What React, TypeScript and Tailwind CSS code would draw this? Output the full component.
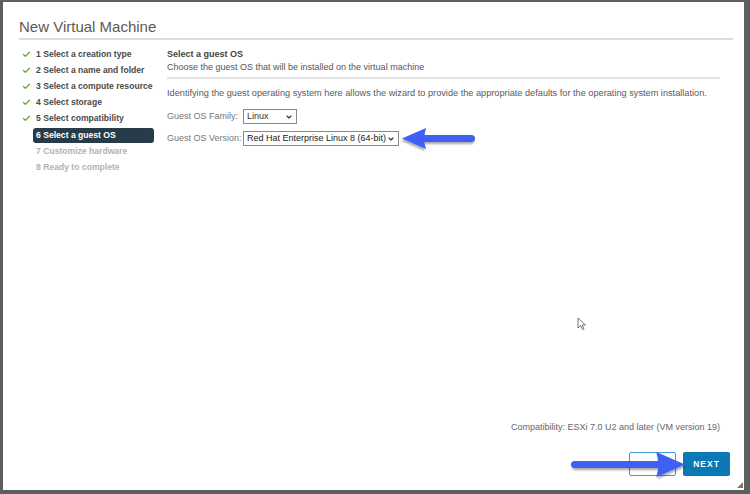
import { Check, ChevronDown } from "lucide-react";

const steps = [
  { n: 1, label: "Select a creation type", done: true },
  { n: 2, label: "Select a name and folder", done: true },
  { n: 3, label: "Select a compute resource", done: true },
  { n: 4, label: "Select storage", done: true },
  { n: 5, label: "Select compatibility", done: true },
  { n: 6, label: "Select a guest OS", active: true },
  { n: 7, label: "Customize hardware" },
  { n: 8, label: "Ready to complete" },
];

// blue annotation arrow, drawn pointing right then flipped if needed
function Arrow({ dir, len, h }: { dir: "left" | "right"; len: number; h: number }) {
  const mid = h / 2;
  const head = h * 1.15;
  return (
    <svg width={len + 6} height={h + 6} viewBox={`0 0 ${len + 6} ${h + 6}`} className={dir === "left" ? "-scale-x-100" : ""}>
      <defs>
        <filter id={`sh-${dir}`} x="-10%" y="-30%" width="120%" height="170%">
          <feDropShadow dx="1" dy="2" stdDeviation="1.3" floodColor="#000" floodOpacity="0.35" />
        </filter>
      </defs>
      <g filter={`url(#sh-${dir})`} fill="#3f5ff5">
        <rect x="1" y={mid - 3.5} width={len - head + 6} height="7" rx="3.5" />
        <path d={`M${len - head} 0 L${len} ${mid} L${len - head} ${h} Q${len - head + 4} ${mid} ${len - head} 0 Z`} />
      </g>
    </svg>
  );
}

export default function App() {
  return (
    <div className="relative h-[494px] w-[750px] overflow-hidden bg-[#5e5e5e] pt-[2px] pl-[3px] pr-[6px] pb-[4px] font-['Liberation_Sans',Arial,sans-serif]">
      <div className="flex h-full flex-col bg-white">
        {/* Header */}
        <div className="mx-[16px] mr-[11px] mt-[15px] border-b-2 border-[#dcdcdc] pb-[2px]">
          <h1 className="text-[15px] leading-[19px] font-normal text-[#5a5a5a]">New Virtual Machine</h1>
        </div>

        <div className="flex flex-1">
          {/* Steps */}
          <div className="w-[164px] shrink-0 pl-[17px] pt-[6px]">
            {steps.map((s) => (
              <div key={s.n} className="flex h-[16.2px] items-center">
                <span className="flex w-[12px] justify-center">
                  {s.done && <Check size={9} strokeWidth={3.5} className="text-[#5aae1e]" />}
                </span>
                <span
                  className={`ml-[1px] flex h-[15px] w-[121px] items-center whitespace-nowrap rounded-[3px] px-[3px] text-[8.6px] font-bold ${
                    s.active ? "bg-[#283b48] text-white" : s.done ? "text-[#4a4a4a]" : "text-[#b3b3b3]"
                  }`}
                >
                  {s.n} {s.label}
                </span>
              </div>
            ))}
          </div>

          {/* Content */}
          <div className="flex flex-1 flex-col pr-[24px] pt-[9px]">
            <p className="text-[9px] leading-[11px] font-bold text-[#444]">Select a guest OS</p>
            <p className="mt-[2px] text-[9px] leading-[11px] text-[#555]">Choose the guest OS that will be installed on the virtual machine</p>
            <div className="mt-[4px] h-[2px] bg-[#e2e2e2]" />
            <p className="mt-[9px] text-[9.2px] leading-[11px] text-[#5a5a5a]">
              Identifying the guest operating system here allows the wizard to provide the appropriate defaults for the operating system installation.
            </p>
            <div className="mt-[10px] flex items-center">
              <span className="w-[76px] text-[9px] text-[#777]">Guest OS Family:</span>
              <div className="flex h-[15px] w-[54px] items-center justify-between border border-[#8a8a8a] px-[3px] text-[9px] text-[#333]">
                <span>Linux</span>
                <ChevronDown size={8} strokeWidth={3.5} className="text-[#333]" />
              </div>
            </div>
            <div className="mt-[7px] flex items-center">
              <span className="w-[76px] text-[9px] text-[#777]">Guest OS Version:</span>
              <div className="flex h-[15px] w-[156px] items-center justify-between border border-[#8a8a8a] px-[3px] text-[9px] text-[#222]">
                <span>Red Hat Enterprise Linux 8 (64-bit)</span>
                <ChevronDown size={8} strokeWidth={3.5} className="text-[#333]" />
              </div>
            </div>

            <div className="flex-1" />
            <p className="self-end text-[9px] text-[#666]">Compatibility: ESXi 7.0 U2 and later (VM version 19)</p>
            <div className="mt-[18px] mb-[14px] mr-[-10px] flex justify-end gap-[7px]">
              <button className="h-[24px] w-[47px] rounded-[2px] border border-[#3c99d2] bg-white" />
              <button className="h-[24px] w-[47px] rounded-[2px] bg-[#0a79b5] text-[8.5px] font-bold tracking-[1px] text-white">NEXT</button>
            </div>
          </div>
        </div>
      </div>

      {/* resize grip */}
      <svg className="absolute left-[737px] top-[482px]" width="6" height="6" viewBox="0 0 6 6">
        <path d="M6 0 L6 6 L0 6 Z" fill="#777" />
      </svg>

      {/* annotation arrows */}
      <div className="absolute left-[396px] top-[128px]">
        <Arrow dir="left" len={74} h={21} />
      </div>
      <div className="absolute left-[570px] top-[452px]">
        <Arrow dir="right" len={115} h={25} />
      </div>

      {/* mouse cursor */}
      <svg className="absolute left-[577px] top-[317px]" width="10" height="14" viewBox="0 0 10 14">
        <path d="M1 1 L1 11 L3.5 8.5 L5.5 12.5 L7 11.8 L5 8 L8.5 8 Z" fill="white" stroke="#555" strokeWidth="0.8" />
      </svg>
    </div>
  );
}
